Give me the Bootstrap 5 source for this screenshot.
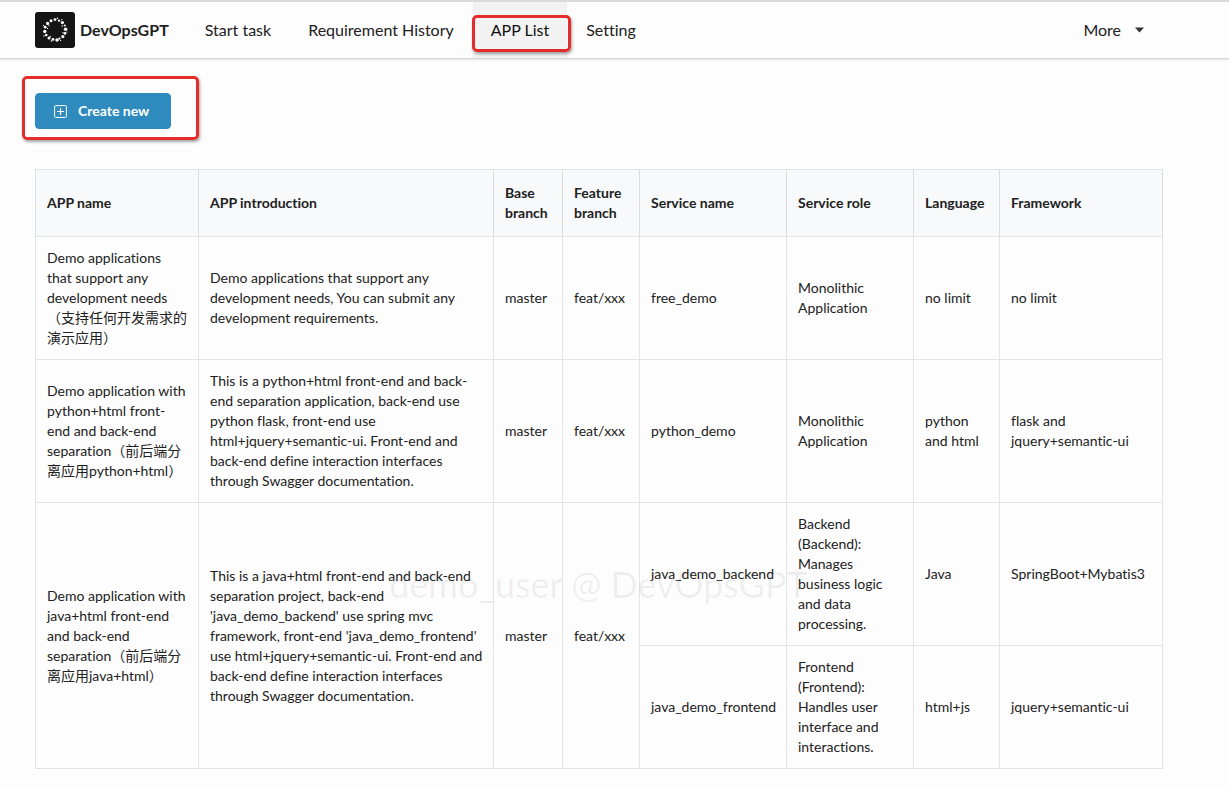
<!DOCTYPE html>
<html lang="en">
<head>
<meta charset="utf-8">
<meta name="viewport" content="width=device-width, initial-scale=1">
<title>DevOpsGPT - APP List</title>
<link href="https://cdn.jsdelivr.net/npm/bootstrap@5.3.0/dist/css/bootstrap.min.css" rel="stylesheet">
<style>
  body { font-family: Lato, "Noto Sans CJK SC", sans-serif; font-size: 14px; line-height: 20px; color: #212121; background: #fdfdfd; font-variant-ligatures: none; }
  .page-gutter { padding-left: 35px; padding-right: 67px; }
  .topbar { border-top: 2px solid #dadadc; border-bottom: 1px solid #d6d6d7; box-shadow: 0 1px 2px rgba(34,36,38,.12); font-size: 16px; height: 59px; }
  .topbar .navbar-brand { font-size: 16px; color: #212121; gap: 5px; padding: 0 18px 0 0; }
  .topbar .navbar-nav { gap: 1px; }
  .topbar .navbar-nav .nav-link { color: #212121; padding: 0 18px; height: 56px; display: flex; align-items: center; position: relative; }
  .topbar .navbar-nav .nav-link.active { color: #111; background: #f2f2f2; }
  .topbar .navbar-nav .more-link { gap: 14px; }
  .callout-box { position: absolute; border: 3px solid #e32d2d; border-radius: 5px; box-shadow: 1px 2px 3px rgba(0,0,0,.35); pointer-events: none; }
  .nav-link .callout-box { inset: 13px -4px 6px -1px; z-index: 1; }
  .create-wrap .callout-box { inset: -17px -28px -11px -13px; }
  .btn-create { --bs-btn-color: #fff; --bs-btn-bg: #2f8bbd; --bs-btn-border-color: #2f8bbd; --bs-btn-hover-color: #fff; --bs-btn-hover-bg: #2679a6; --bs-btn-hover-border-color: #2679a6; --bs-btn-font-weight: 700; --bs-btn-font-size: 14px; --bs-btn-line-height: 20px; --bs-btn-border-radius: 4px; --bs-btn-padding-y: 7px; padding-left: 18px; padding-right: 21px; gap: 11px; }
  .create-row { padding-top: 34px; padding-bottom: 40px; }
  .app-table { --bs-table-bg: transparent; --bs-table-color: #212121; table-layout: fixed; border-color: #e4e4e5; }
  .app-table > :not(caption) > * > * { padding: 11px; border-color: #e4e4e5; }
  .app-table > thead > tr > th { padding-top: 13px; padding-bottom: 13px; background: #f8f9fb; vertical-align: middle; border-color: #dcddde; }
  .app-table > tbody > tr > td:nth-child(2) { padding-right: 8px; }
  .app-table > tbody > tr > td[rowspan] { border-bottom-color: #d8d9da; }
  .c-name { width: 163px; } .c-intro { width: 295px; } .c-base { width: 69px; } .c-feat { width: 77px; }
  .c-serv { width: 147px; } .c-role { width: 127px; } .c-lang { width: 86px; } .c-frame { width: 163px; }
  .watermark { top: 393px; font-size: 36px; line-height: 44px; color: rgba(0,0,0,.06); pointer-events: none; }
</style>
</head>
<body>
<nav class="topbar navbar-expand page-gutter d-flex align-items-center">
  <a class="navbar-brand d-flex align-items-center fw-bold me-0" href="#">
    <svg width="40" height="36" viewBox="0 0 40 36" aria-hidden="true">
      <rect width="40" height="36" rx="3" fill="#151515"/>
      <g fill="#fff">
        <circle cx="20" cy="7.6" r="1.4"/><circle cx="24" cy="8.6" r="1.2"/><circle cx="27.4" cy="10.6" r="1.6"/><circle cx="29.8" cy="13.6" r="1"/>
        <circle cx="30.6" cy="17.2" r="1.8"/><circle cx="30" cy="21.4" r="1.3"/><circle cx="27.8" cy="24.6" r="1.6"/><circle cx="24.4" cy="26.6" r="1.1"/>
        <circle cx="22" cy="28" r="1.7"/><circle cx="18" cy="27.4" r="1.4"/><circle cx="14" cy="26" r="1.5"/><circle cx="11.2" cy="23" r="1.3"/>
        <circle cx="9.8" cy="19.4" r="1.7"/><circle cx="10.2" cy="15.2" r="1.4"/><circle cx="12.6" cy="11.4" r="1.6"/><circle cx="16" cy="8.8" r="1.5"/>
        <circle cx="22.4" cy="6.2" r=".8"/><circle cx="26.8" cy="7.6" r=".7"/><circle cx="27.2" cy="14" r=".7"/><circle cx="32" cy="20" r=".6"/>
        <circle cx="28" cy="20.8" r=".7"/><circle cx="25.6" cy="28.4" r=".6"/><circle cx="16.4" cy="29" r=".8"/><circle cx="15.4" cy="24.4" r=".6"/>
        <circle cx="9" cy="24" r=".7"/><circle cx="8.4" cy="13.6" r=".7"/><circle cx="12.6" cy="16.4" r=".6"/><circle cx="14" cy="13.6" r=".7"/>
      </g>
    </svg>
    <span>DevOpsGPT</span>
  </a>
  <ul class="navbar-nav flex-row flex-grow-1">
    <li class="nav-item"><a class="nav-link" href="#">Start task</a></li>
    <li class="nav-item"><a class="nav-link" href="#">Requirement History</a></li>
    <li class="nav-item"><a class="nav-link active" aria-current="page" href="#">APP List<span class="callout-box"></span></a></li>
    <li class="nav-item"><a class="nav-link" href="#">Setting</a></li>
    <li class="nav-item ms-auto"><a class="nav-link more-link" href="#" role="button" aria-haspopup="true">More
      <svg width="9" height="6" viewBox="0 0 9 6" aria-hidden="true"><path d="M0 .5h9L4.500 5.500z" fill="#333"/></svg></a></li>
  </ul>
</nav>

<main class="page-gutter pb-3">
  <div class="create-row d-flex">
    <div class="create-wrap position-relative">
      <button type="button" class="btn btn-create d-flex align-items-center">
        <svg width="13" height="13" viewBox="0 0 13 13" fill="none" stroke="#fff" aria-hidden="true"><rect x=".6" y=".6" width="11.800" height="11.800" rx="1"/><path d="M6.500 3v7M3 6.500h7" stroke-width="1.200"/></svg>
        Create new
      </button>
      <span class="callout-box"></span>
    </div>
  </div>

  <div class="position-relative">
    <table class="table table-bordered app-table align-middle mb-0">
      <colgroup><col class="c-name"><col class="c-intro"><col class="c-base"><col class="c-feat"><col class="c-serv"><col class="c-role"><col class="c-lang"><col class="c-frame"></colgroup>
      <thead>
        <tr><th scope="col">APP name</th><th scope="col">APP introduction</th><th scope="col">Base branch</th><th scope="col">Feature branch</th><th scope="col">Service name</th><th scope="col">Service role</th><th scope="col">Language</th><th scope="col">Framework</th></tr>
      </thead>
      <tbody>
        <tr>
          <td>Demo applications that support any development needs（支持任何开发需求的演示应用）</td>
          <td>Demo applications that support any development needs, You can submit any development requirements.</td>
          <td>master</td><td>feat/xxx</td><td>free_demo</td><td>Monolithic Application</td><td>no limit</td><td>no limit</td>
        </tr>
        <tr>
          <td>Demo application with python+html front-end and back-end separation（前后端分离应用python+html）</td>
          <td>This is a python+html front-end and back-end separation application, back-end use python flask, front-end use html+jquery+semantic-ui. Front-end and back-end define interaction interfaces through Swagger documentation.</td>
          <td>master</td><td>feat/xxx</td><td>python_demo</td><td>Monolithic Application</td><td>python and html</td><td>flask and jquery+semantic-ui</td>
        </tr>
        <tr>
          <td rowspan="2">Demo application with java+html front-end and back-end separation（前后端分离应用java+html）</td>
          <td rowspan="2">This is a java+html front-end and back-end separation project, back-end 'java_demo_backend' use spring mvc framework, front-end 'java_demo_frontend' use html+jquery+semantic-ui. Front-end and back-end define interaction interfaces through Swagger documentation.</td>
          <td rowspan="2">master</td><td rowspan="2">feat/xxx</td>
          <td>java_demo_backend</td><td>Backend (Backend): Manages business logic and data processing.</td><td>Java</td><td>SpringBoot+Mybatis3</td>
        </tr>
        <tr>
          <td>java_demo_frontend</td><td class="pe-2">Frontend (Frontend): Handles user interface and interactions.</td><td>html+js</td><td>jquery+semantic-ui</td>
        </tr>
      </tbody>
    </table>
    <div class="watermark position-absolute start-0 end-0 text-center">demo_user @ DevOpsGPT</div>
  </div>
</main>
<script src="https://cdn.jsdelivr.net/npm/bootstrap@5.3.0/dist/js/bootstrap.bundle.min.js"></script>
</body>
</html>
